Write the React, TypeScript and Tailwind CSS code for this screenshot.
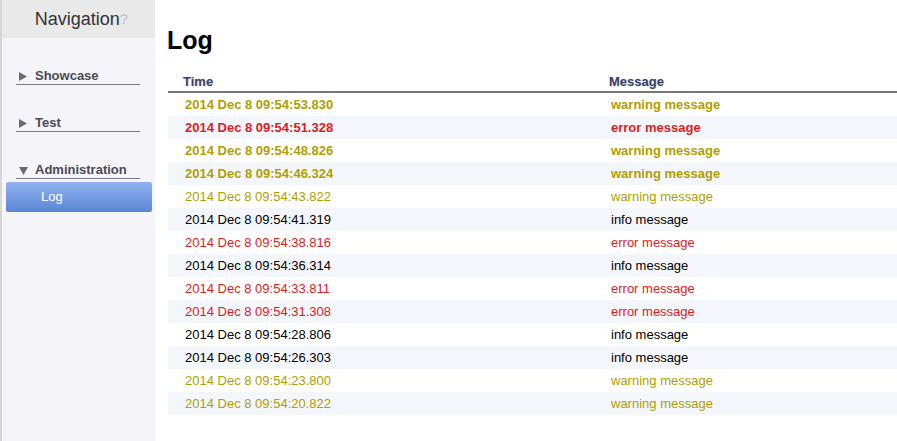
import React from 'react';

type Level = 'warning' | 'error' | 'info';

const rows: { time: string; level: Level; bold?: boolean }[] = [
  { time: '2014 Dec 8 09:54:53.830', level: 'warning', bold: true },
  { time: '2014 Dec 8 09:54:51.328', level: 'error', bold: true },
  { time: '2014 Dec 8 09:54:48.826', level: 'warning', bold: true },
  { time: '2014 Dec 8 09:54:46.324', level: 'warning', bold: true },
  { time: '2014 Dec 8 09:54:43.822', level: 'warning' },
  { time: '2014 Dec 8 09:54:41.319', level: 'info' },
  { time: '2014 Dec 8 09:54:38.816', level: 'error' },
  { time: '2014 Dec 8 09:54:36.314', level: 'info' },
  { time: '2014 Dec 8 09:54:33.811', level: 'error' },
  { time: '2014 Dec 8 09:54:31.308', level: 'error' },
  { time: '2014 Dec 8 09:54:28.806', level: 'info' },
  { time: '2014 Dec 8 09:54:26.303', level: 'info' },
  { time: '2014 Dec 8 09:54:23.800', level: 'warning' },
  { time: '2014 Dec 8 09:54:20.822', level: 'warning' },
];

const levelColor: Record<Level, string> = {
  warning: 'text-[#b09e00]',
  error: 'text-[#dd1c1c]',
  info: 'text-black',
};

function Section({ label, open }: { label: string; open?: boolean }) {
  return (
    <div className="ml-[14px] mr-[15px] h-[22px] border-b border-[#7a7a80] flex items-end text-[13px] font-bold text-[#4a4a55] leading-[16px]">
      <span className="w-[19px] h-[16px] pl-[3px] flex items-center">
        {open ? (
          <svg width="9" height="9" viewBox="0 0 9 9">
            <path d="M0 1 L9 1 L4.5 9 Z" fill="#6a6a75" />
          </svg>
        ) : (
          <svg width="9" height="9" viewBox="0 0 9 9">
            <path d="M0 0 L8 4.5 L0 9 Z" fill="#6a6a75" />
          </svg>
        )}
      </span>
      <span>{label}</span>
    </div>
  );
}

export default function App() {
  return (
    <div className="flex w-[897px] h-[441px] bg-white font-['Liberation_Sans',Arial,sans-serif] overflow-hidden">
      {/* боковая навигация */}
      <aside className="w-[155px] shrink-0 bg-[#f5f4f9] border-l-2 border-[#d6d6d6] flex flex-col">
        <div className="h-[38px] bg-[#e9e9e9] flex items-center justify-center pl-[6px] text-[18px] text-[#333]">
          Navigation<span className="text-[#c0c0c0] text-[15px]">?</span>
        </div>
        <div className="pt-[25px]">
          <Section label="Showcase" />
        </div>
        <div className="pt-[25px]">
          <Section label="Test" />
        </div>
        <div className="pt-[25px]">
          <Section label="Administration" open />
        </div>
        <div className="mt-[3px] ml-[4px] mr-[3px] h-[30px] rounded-[2px] bg-gradient-to-b from-[#91b2f0] to-[#5b86d6] text-white text-[13px] flex items-center pl-[35px]">
          Log
        </div>
      </aside>

      {/* основная часть */}
      <main className="flex-1 pl-[13px] pt-[25px]">
        <h1 className="text-[25px] font-bold text-black leading-[30px] -ml-[1px]">Log</h1>
        <div className="mt-[17px]">
          <div className="flex h-[21px] items-center border-b-2 border-[#777] text-[13px] font-bold text-[#3c4257] [text-shadow:0_0_2px_#c4d2ff]">
            <div className="w-[441px] pl-[15px]">Time</div>
            <div>Message</div>
          </div>
          {rows.map((r, i) => (
            <div
              key={r.time}
              className={`flex h-[23px] items-center text-[13px] ${i % 2 === 1 ? 'bg-[#f3f6fa]' : 'bg-white'} ${levelColor[r.level]} ${r.bold ? 'font-bold' : ''}`}
            >
              <div className="w-[441px] pl-[17px]">{r.time}</div>
              <div className="pl-[2px]">{r.level} message</div>
            </div>
          ))}
        </div>
      </main>
    </div>
  );
}
